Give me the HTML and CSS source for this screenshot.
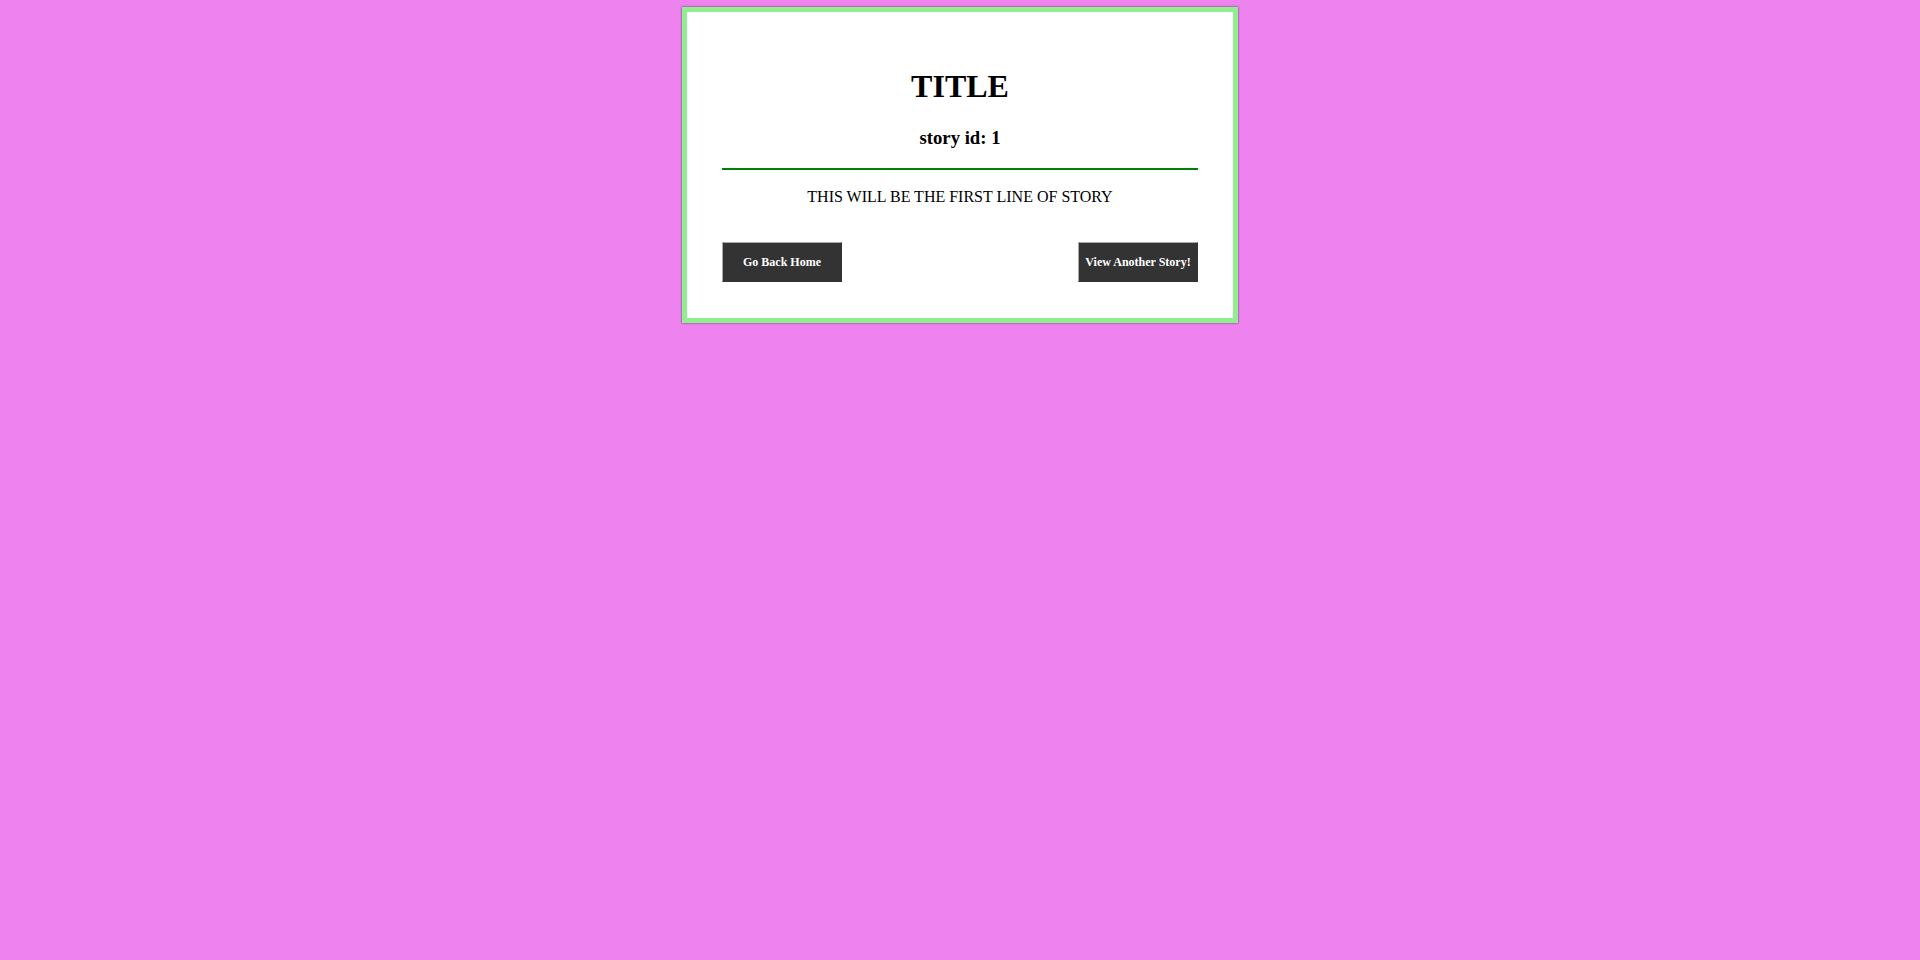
FILE: index.html
```html
<!DOCTYPE html>
<html>
<head>
<meta charset="utf-8">
<title>Story</title>
<link rel="stylesheet" href="styles.css">
</head>
<body>
<div class="card">
  <h1 class="title">TITLE</h1>
  <h3 class="story-id">story id: 1</h3>
  <hr class="divider">
  <p class="story-line">THIS WILL BE THE FIRST LINE OF STORY</p>
  <div class="actions">
    <button class="btn">Go Back Home</button>
    <button class="btn">View Another Story!</button>
  </div>
</div>
</body>
</html>
```

FILE: styles.css
```css
html, body {
  margin: 0;
  padding: 0;
}
body {
  background: #ee82ee;
  font-family: "Liberation Serif", "Times New Roman", serif;
  color: #000;
  min-height: 960px;
  padding-top: 7px;
  box-sizing: border-box;
}
.card {
  width: 556px;
  box-sizing: border-box;
  margin: 0 auto;
  background: #fff;
  border: 5px solid #90ee90;
  box-shadow: 0 0 2px rgba(0, 0, 0, 0.6);
  padding: 35px 35px 36px;
  text-align: center;
}
.title {
  font-size: 32px;
  font-weight: bold;
  margin: 21px 0 22px;
}
.story-id {
  font-size: 18.72px;
  font-weight: bold;
  margin: 18.72px 0 0;
}
.divider {
  border: none;
  height: 2px;
  background: #008000;
  margin: 19px 0 0;
}
.story-line {
  font-size: 16px;
  margin: 18px 0 0;
}
.actions {
  display: flex;
  justify-content: space-between;
  margin-top: 36px;
}
.btn {
  width: 120px;
  height: 40px;
  padding: 0;
  background: #333;
  color: #fff;
  font-family: "Liberation Serif", "Times New Roman", serif;
  font-size: 12px;
  font-weight: bold;
  border: 1px solid;
  border-color: #a9a9a9 #333 #333 #a9a9a9;
  cursor: pointer;
}
```
